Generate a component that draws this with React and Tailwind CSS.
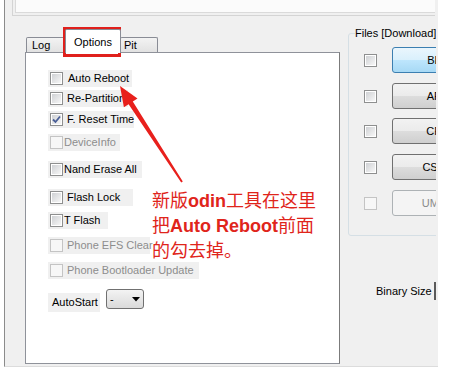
import React from "react";

const options = [
  { label: "Auto Reboot", mt: "mt-[17px]", w: "w-[84px]", gap: "ml-[5px]" },
  { label: "Re-Partition", mt: "mt-[3px]", w: "w-[80px]", gap: "ml-[4px]" },
  { label: "F. Reset Time", mt: "mt-[4px]", w: "w-[86px]", gap: "ml-[4px]", checked: true },
  { label: "DeviceInfo", mt: "mt-[6px]", w: "w-[72px]", gap: "ml-[1px]", disabled: true },
  { label: "Nand Erase All", mt: "mt-[10px]", w: "w-[94px]", gap: "ml-[1px]" },
  { label: "Flash Lock", mt: "mt-[11px]", w: "w-[85px]", gap: "ml-[4px]" },
  { label: "T Flash", mt: "mt-[6px]", w: "w-[60px]", gap: "ml-[1px]" },
  { label: "Phone EFS Clear", mt: "mt-[8px]", w: "w-[102px]", gap: "ml-[4px]", disabled: true },
  { label: "Phone Bootloader Update", mt: "mt-[8px]", w: "w-[151px]", gap: "ml-[4px]", disabled: true },
];

const files = [
  { label: "BL", mt: "mt-[7px]", focused: true },
  { label: "AP", mt: "mt-[10px]" },
  { label: "CP", mt: "mt-[9px]" },
  { label: "CSC", mt: "mt-[10px]" },
  { label: "UMS", mt: "mt-[10px]", disabled: true },
];

function CheckBox({ checked, disabled }) {
  if (disabled) {
    return (
      <span className="block w-[13px] h-[13px] shrink-0 border border-[#c4c4c4] bg-[#f7f7f7]" />
    );
  }
  return (
    <span className="w-[13px] h-[13px] shrink-0 border border-[#8e8f8f] bg-white p-[1px] flex">
      <span className="flex-1 bg-gradient-to-br from-[#cfd1d4] to-[#f7f7f7] flex items-center justify-center">
        {checked && (
          <svg width="9" height="9" viewBox="0 0 9 9">
            <path d="M1 4.5 L3.5 7 L8 1.5" fill="none" stroke="#4a5f97" strokeWidth="1.8" />
          </svg>
        )}
      </span>
    </span>
  );
}

export default function App() {
  return (
    <div className="relative w-[453px] h-[371px] bg-white overflow-hidden font-['Liberation_Sans',Arial,sans-serif] text-[11px] leading-[13px] text-black">
      {/* window */}
      <div className="ml-[4px] w-[434px] h-[367px] bg-[#f0f0f0] border-l border-[#8b8b8b] border-b border-b-[#dcdcdc] flex flex-col overflow-hidden">
        {/* top group box remnant */}
        <div className="ml-[7px] mr-[3px] h-[16px] border-l border-b border-[#d4d4d4] pl-[2px] pb-[2px]">
          <div className="h-full border-l border-b border-[#dadada] bg-[#fbfbfb]" />
        </div>

        <div className="flex mt-[13px]">
          {/* tab control */}
          <div className="ml-[20px] w-[315px] flex flex-col">
            <div className="h-[23px] flex items-end">
              <div className="ml-[1px] w-[41px] h-[15px] border border-b-0 border-[#898c95] rounded-t-[2px] bg-gradient-to-b from-[#f3f3f3] to-[#e2e2e2] pl-[5px] flex items-center">
                Log
              </div>
              <div className="-ml-[2px] w-[56px] h-[24px] -mb-[1px] relative z-10 bg-white border border-b-0 border-[#898c95] rounded-t-[2px] pt-[6px] text-center">
                Options
              </div>
              <div className="-ml-[1px] w-[38px] h-[15px] border border-b-0 border-[#898c95] rounded-t-[2px] bg-gradient-to-b from-[#f3f3f3] to-[#e2e2e2] pl-[3px] flex items-center">
                Pit
              </div>
            </div>
            <div className="h-[312px] bg-white border border-[#8f929a] border-r-[#7b7b7b] pl-[22px] flex flex-col items-start">
              {options.map((o) => (
                <div
                  key={o.label}
                  className={`${o.mt} ${o.w} h-[17px] pl-[2px] bg-[#f0f0f0] flex items-center`}
                >
                  <CheckBox checked={o.checked} disabled={o.disabled} />
                  <span className={`${o.gap} whitespace-nowrap ${o.disabled ? "text-[#8d8d8d]" : ""}`}>
                    {o.label}
                  </span>
                </div>
              ))}
              <div className="mt-[10px] flex items-start">
                <div className="mt-[4px] w-[52px] h-[19px] bg-[#f0f0f0] pl-[4px] flex items-center">
                  AutoStart
                </div>
                <div className="ml-[6px] w-[38px] h-[20px] rounded-[3px] border border-[#707070] bg-gradient-to-b from-[#f3f3f3] to-[#dadada] pl-[3px] flex items-center">
                  <span>-</span>
                  <svg className="ml-[18px]" width="8" height="5" viewBox="0 0 8 5">
                    <path d="M0 0 H8 L4 4.5 Z" fill="#000" />
                  </svg>
                </div>
              </div>
            </div>
          </div>

          {/* right column */}
          <div className="w-[96px] overflow-hidden flex flex-col">
            <div className="ml-[8px] mt-[4px] w-[120px] h-[203px] border border-[#d5dfe5] rounded-[3px] flex flex-col">
              <span className="-mt-[7px] ml-[6px] h-[13px] self-start bg-[#f0f0f0] whitespace-nowrap">
                Files [Download]
              </span>
              {files.map((f) => (
                <div key={f.label} className={`${f.mt} h-[26px] flex items-center`}>
                  <span className="ml-[15px] flex">
                    <CheckBox disabled={f.disabled} />
                  </span>
                  <div
                    className={`ml-[15px] w-[84px] h-[26px] shrink-0 rounded-[3px] border flex items-center justify-center ${
                      f.disabled
                        ? "border-[#adb2b5] bg-[#f4f4f4] text-[#8a8a8a]"
                        : f.focused
                        ? "border-[#3c7fb1] bg-[linear-gradient(#eaf6fd_0%,#d9f0fc_50%,#bee6fd_50%,#a7d9f5_100%)]"
                        : "border-[#707070] bg-[linear-gradient(#f2f2f2_0%,#ebebeb_50%,#dddddd_50%,#cfcfcf_100%)]"
                    }`}
                  >
                    {f.label}
                  </div>
                </div>
              ))}
            </div>
            <div className="mt-[45px] ml-[36px] h-[20px] flex items-center">
              <span className="whitespace-nowrap">Binary Size</span>
              <span className="ml-[2px] h-[18px] w-[4px] shrink-0 border-l-2 border-[#5a5a5a]" />
            </div>
          </div>
        </div>
      </div>

      {/* annotation overlay */}
      <div className="absolute left-[63px] top-[27px] w-[58px] h-[30px] border-[3px] border-[#e0201c]" />
      <svg className="absolute left-0 top-0 pointer-events-none" width="453" height="371">
        <polygon points="120,86 137.5,98.6 132.8,101.6 182.8,181.5 181.2,182.5 128.6,104.2 123.9,107.2" fill="#e8201c" />
      </svg>
      <div className="absolute left-[152px] top-[188px] text-[18px] leading-[23px] text-[#e0251b] font-['Noto_Sans_CJK_SC',sans-serif] whitespace-nowrap">
        <div>
          新版<span className="font-['Liberation_Sans',Arial,sans-serif] font-bold">odin</span>工具在这里
        </div>
        <div>
          把<span className="font-['Liberation_Sans',Arial,sans-serif] font-bold">Auto Reboot</span>前面
        </div>
        <div>的勾去掉。</div>
      </div>
    </div>
  );
}
